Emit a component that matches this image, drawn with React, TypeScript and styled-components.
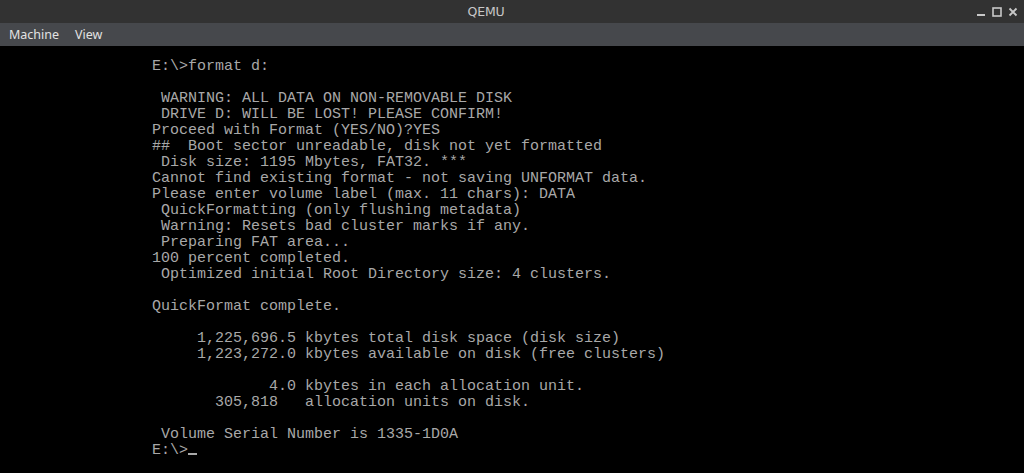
import React from "react";
import styled, { createGlobalStyle } from "styled-components";

const Global = createGlobalStyle`
  html, body { margin: 0; padding: 0; background: #000; }
  body { width: 1024px; height: 473px; overflow: hidden; }
`;

const Window = styled.div`
  width: 1024px;
  height: 473px;
  display: flex;
  flex-direction: column;
  background: #000;
`;

const TitleBar = styled.div`
  height: 23px;
  background: #323232;
  display: grid;
  grid-template-columns: 1fr auto 1fr;
  align-items: center;
  font-family: "DejaVu Sans", sans-serif;
  font-size: 12.5px;
  color: #c8c8c8;
`;

const Title = styled.div`
  grid-column: 2;
  padding-right: 52px;
  letter-spacing: -0.2px;
`;

const Controls = styled.div`
  grid-column: 3;
  justify-self: end;
  display: flex;
  align-items: center;
  gap: 6px;
  padding-right: 6px;
  height: 100%;
`;

const MenuBar = styled.div`
  height: 23px;
  background: #46484c;
  display: flex;
  align-items: center;
  gap: 16px;
  padding-left: 9px;
  font-family: "Noto Sans", sans-serif;
  font-size: 12.5px;
  color: #e2e2e2;
`;

const MenuItem = styled.span``;

const Screen = styled.div`
  flex: 1;
  display: flex;
  justify-content: center;
  padding-top: 13px;
`;

const Console = styled.pre`
  margin: 0;
  width: 720px;
  height: 400px;
  font-family: "Liberation Mono", monospace;
  font-size: 15px;
  line-height: 16px;
  color: #a8a8a8;
  white-space: pre;
`;

const Cursor = styled.span`
  display: inline-block;
  width: 9px;
  height: 2px;
  background: #a8a8a8;
  vertical-align: -1px;
`;

const lines = [
  "E:\\>format d:",
  "",
  " WARNING: ALL DATA ON NON-REMOVABLE DISK",
  " DRIVE D: WILL BE LOST! PLEASE CONFIRM!",
  "Proceed with Format (YES/NO)?YES",
  "##  Boot sector unreadable, disk not yet formatted",
  " Disk size: 1195 Mbytes, FAT32. ***",
  "Cannot find existing format - not saving UNFORMAT data.",
  "Please enter volume label (max. 11 chars): DATA",
  " QuickFormatting (only flushing metadata)",
  " Warning: Resets bad cluster marks if any.",
  " Preparing FAT area...",
  "100 percent completed.",
  " Optimized initial Root Directory size: 4 clusters.",
  "",
  "QuickFormat complete.",
  "",
  "     1,225,696.5 kbytes total disk space (disk size)",
  "     1,223,272.0 kbytes available on disk (free clusters)",
  "",
  "             4.0 kbytes in each allocation unit.",
  "       305,818   allocation units on disk.",
  "",
  " Volume Serial Number is 1335-1D0A",
];

export default function App() {
  return (
    <>
      <Global />
      <Window>
        <TitleBar>
          <Title>QEMU</Title>
          <Controls>
            <svg width="10" height="10" viewBox="0 0 10 10">
              <rect x="1" y="7" width="8" height="2" fill="#c8c8c8" />
            </svg>
            <svg width="10" height="10" viewBox="0 0 10 10">
              <rect x="1" y="1" width="8" height="8" fill="none" stroke="#c8c8c8" strokeWidth="1.6" />
            </svg>
            <svg width="10" height="10" viewBox="0 0 10 10">
              <path d="M1.5 1.5 L8.5 8.5 M8.5 1.5 L1.5 8.5" stroke="#c8c8c8" strokeWidth="1.8" />
            </svg>
          </Controls>
        </TitleBar>
        <MenuBar>
          <MenuItem>Machine</MenuItem>
          <MenuItem>View</MenuItem>
        </MenuBar>
        <Screen>
          <Console>
            {lines.join("\n") + "\n"}
            {"E:\\>"}
            <Cursor />
          </Console>
        </Screen>
      </Window>
    </>
  );
}
